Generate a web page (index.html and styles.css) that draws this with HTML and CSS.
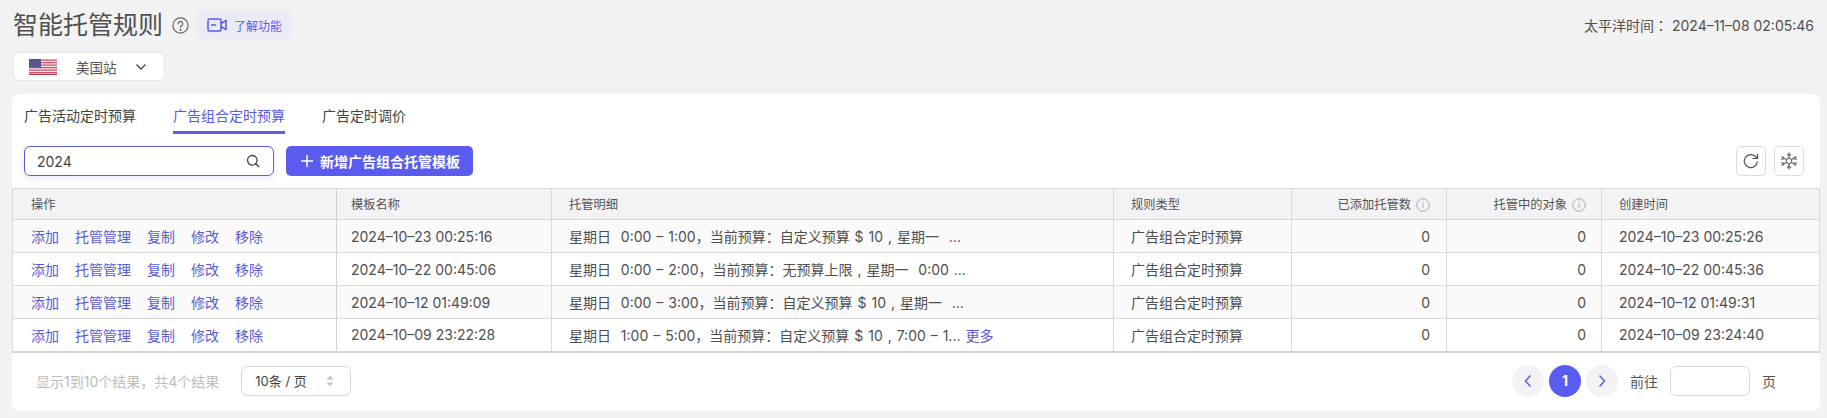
FILE: index.html
```html
<!DOCTYPE html>
<html lang="zh-CN">
<head>
    <meta charset="UTF-8">
    <meta name="viewport" content="width=device-width, initial-scale=1.0">
    <title>智能托管规则</title>
    <link rel="stylesheet" href="styles.css">
</head>
<body>
    <header class="page-head">
        <div class="title-wrap">
            <h1>智能托管规则</h1>
            <svg class="help-icon" viewBox="0 0 17 17" fill="none" stroke="#666" stroke-width="1.2">
                <circle cx="8.5" cy="8.5" r="7.6"/>
                <path d="M6.2 6.8a2.3 2.300 0 1 1 3.600 1.800c-.8.5-1.300.9-1.300 1.800" stroke-linecap="round"/>
                <circle cx="8.5" cy="12.800" r=".5" fill="#666"/>
            </svg>
            <button class="learn-btn">
                <svg class="video-icon" viewBox="0 0 20 14" fill="none" stroke="#5a5be8" stroke-width="1.5">
                    <rect x="1" y="1" width="13" height="12" rx="1.5"/>
                    <path d="M4.5 7h4" stroke-linecap="round"/>
                    <path d="M14 5.5 19 2.5v9l-5-3" stroke-linejoin="round"/>
                </svg>
                了解功能
            </button>
        </div>
        <div class="clock">太平洋时间<span class="clock-colon" lang="zh-TW">：</span> 2024–11–08 02:05:46</div>
    </header>

    <div class="site-select">
        <svg class="flag" viewBox="0 0 28 16">
            <rect width="28" height="16" fill="#f4e6e8"/>
            <path d="M0 1.2h28M0 3.7h28M0 6.2h28M0 8.7h28M0 11.2h28M0 13.7h28" stroke="#c4566a" stroke-width="1.2"/>
            <path d="M0 15.4h28" stroke="#b03a50" stroke-width="1.2"/>
            <rect width="12" height="8.6" fill="#55568f"/>
        </svg>
        <span class="site-name">美国站</span>
        <svg class="chevron" viewBox="0 0 12 8" fill="none" stroke="#444" stroke-width="1.4"><path d="M1.5 1.5 6 6l4.500-4.500"/></svg>
    </div>

    <main class="card">
        <nav class="tabs">
            <a class="tab">广告活动定时预算</a>
            <a class="tab active">广告组合定时预算</a>
            <a class="tab">广告定时调价</a>
        </nav>

        <div class="toolbar">
            <div class="search">
                <span>2024</span>
                <svg class="search-icon" viewBox="0 0 14 14" fill="none" stroke="#444" stroke-width="1.300">
                    <circle cx="6.300" cy="6.300" r="4.800"/>
                    <path d="m9.800 9.800 3 3" stroke-linecap="round"/>
                </svg>
            </div>
            <button class="add-btn">
                <svg class="plus" viewBox="0 0 12 12" fill="none" stroke="#fff" stroke-width="1.500"><path d="M6 0v12M0 6h12"/></svg>
                新增广告组合托管模板
            </button>
            <div class="tool-icons">
                <button class="icon-btn">
                    <svg viewBox="0 0 18 18" fill="none" stroke="#555" stroke-width="1.200">
                        <path d="M15.300 9.500a6.500 6.500 0 1 1-1.900-5l1.900 1.800" stroke-linecap="round"/>
                        <path d="M15.500 2v4.500H11" stroke-linejoin="round" stroke-linecap="round"/>
                    </svg>
                </button>
                <button class="icon-btn">
                    <svg viewBox="0 0 18 18" fill="none" stroke="#666" stroke-width="1.100">
                        <path d="M9 .5v17M1.600 4.700l14.800 8.600M16.400 4.700 1.600 13.300"/>
                        <path d="M7 2 9 3.800 11 2M7 16 9 14.200 11 16M1.200 7.400l2.600-.6-.8-2.500M16.800 7.400l-2.600-.6.8-2.500M1.200 10.600l2.600.6-.8 2.500M16.800 10.600l-2.600.6.8 2.500"/>
                        <path d="m9 6 2.600 1.500v3L9 12l-2.600-1.500v-3z" fill="#fff"/>
                    </svg>
                </button>
            </div>
        </div>

        <table class="rule-table">
            <colgroup>
                <col class="col-actions"><col class="col-name"><col class="col-detail"><col class="col-type"><col class="col-added"><col class="col-active"><col class="col-created">
            </colgroup>
            <thead>
                <tr>
                    <th class="first">操作</th>
                    <th class="after-fixed">模板名称</th>
                    <th>托管明细</th>
                    <th>规则类型</th>
                    <th class="num">已添加托管数<svg class="info" viewBox="0 0 14 14" fill="none" stroke="#a8a8ae"><circle cx="7" cy="7" r="6.300"/><path d="M7 6v4.200M7 3.600v1"/></svg></th>
                    <th class="num">托管中的对象<svg class="info" viewBox="0 0 14 14" fill="none" stroke="#a8a8ae"><circle cx="7" cy="7" r="6.300"/><path d="M7 6v4.200M7 3.600v1"/></svg></th>
                    <th>创建时间</th>
                </tr>
            </thead>
            <tbody>
                <tr>
                    <td class="first"><div class="actions"><a>添加</a><a>托管管理</a><a>复制</a><a>修改</a><a>移除</a></div></td>
                    <td class="after-fixed">2024–10–23 00:25:16</td>
                    <td class="detail">星期日 &nbsp;0:00 – 1:00，当前预算：自定义预算 $ 10 , 星期一 &nbsp;...</td>
                    <td>广告组合定时预算</td>
                    <td class="num">0</td>
                    <td class="num">0</td>
                    <td>2024–10–23 00:25:26</td>
                </tr>
                <tr>
                    <td class="first"><div class="actions"><a>添加</a><a>托管管理</a><a>复制</a><a>修改</a><a>移除</a></div></td>
                    <td class="after-fixed">2024–10–22 00:45:06</td>
                    <td class="detail">星期日 &nbsp;0:00 – 2:00，当前预算：无预算上限 , 星期一 &nbsp;0:00 ...</td>
                    <td>广告组合定时预算</td>
                    <td class="num">0</td>
                    <td class="num">0</td>
                    <td>2024–10–22 00:45:36</td>
                </tr>
                <tr>
                    <td class="first"><div class="actions"><a>添加</a><a>托管管理</a><a>复制</a><a>修改</a><a>移除</a></div></td>
                    <td class="after-fixed">2024–10–12 01:49:09</td>
                    <td class="detail">星期日 &nbsp;0:00 – 3:00，当前预算：自定义预算 $ 10 , 星期一 &nbsp;...</td>
                    <td>广告组合定时预算</td>
                    <td class="num">0</td>
                    <td class="num">0</td>
                    <td>2024–10–12 01:49:31</td>
                </tr>
                <tr>
                    <td class="first"><div class="actions"><a>添加</a><a>托管管理</a><a>复制</a><a>修改</a><a>移除</a></div></td>
                    <td class="after-fixed">2024–10–09 23:22:28</td>
                    <td class="detail">星期日 &nbsp;1:00 – 5:00，当前预算：自定义预算 $ 10 , 7:00 – 1... <a class="more">更多</a></td>
                    <td>广告组合定时预算</td>
                    <td class="num">0</td>
                    <td class="num">0</td>
                    <td>2024–10–09 23:24:40</td>
                </tr>
            </tbody>
        </table>

        <footer class="table-foot">
            <div class="foot-left">
                <span class="summary">显示1到10个结果，共4个结果</span>
                <div class="page-size">
                    <span>10条 / 页</span>
                    <svg class="sort-icon" viewBox="0 0 8 12" fill="#c4c4c8"><path d="M4 .5 7.500 4.500H.5zM4 11.500.5 7.500h7z"/></svg>
                </div>
            </div>
            <div class="pager">
                <button class="page-btn"><svg viewBox="0 0 8 14" fill="none" stroke="#5a5be8" stroke-width="1.500"><path d="M6.500 1.500 1.500 7l5 5.500"/></svg></button>
                <button class="page-btn current">1</button>
                <button class="page-btn"><svg viewBox="0 0 8 14" fill="none" stroke="#5a5be8" stroke-width="1.500"><path d="M1.500 1.500 6.500 7l-5 5.500"/></svg></button>
                <span class="goto">前往</span>
                <div class="page-input"></div>
                <span class="goto-unit">页</span>
            </div>
        </footer>
    </main>
</body>
</html>
```

FILE: styles.css
```css
* {
    box-sizing: border-box;
}

html, body {
    margin: 0;
    height: 418px;
    overflow: hidden;
}

body {
    font-family: Inter, "Noto Sans CJK SC", sans-serif;
    font-size: 14px;
    color: #555555;
    background: #f2f2f3;
    padding: 11px 7px 0 12px;
}

button {
    font-family: inherit;
    border: none;
    cursor: pointer;
}

.page-head {
    display: flex;
    justify-content: space-between;
    align-items: center;
    height: 28px;
}

.title-wrap {
    display: flex;
    align-items: center;
    padding-left: 1px;
}

h1 {
    margin: 0;
    font-size: 25px;
    font-weight: 400;
    line-height: 28px;
    color: #505050;
}

.help-icon {
    width: 17px;
    height: 17px;
    margin-left: 9px;
}

.learn-btn {
    display: flex;
    align-items: center;
    gap: 7px;
    height: 28px;
    width: 94px;
    margin-left: 8px;
    padding: 0 0 0 10px;
    border-radius: 4px;
    background: #ebebf7;
    color: #5a5be8;
    font-size: 12px;
}

.video-icon {
    width: 20px;
    height: 14px;
}

.clock {
    padding-right: 6px;
    color: #505050;
}

.clock-colon {
    font-family: "Noto Sans CJK TC", sans-serif;
}

.site-select {
    display: flex;
    align-items: center;
    width: 152px;
    height: 29px;
    margin: 13px 0 13px 1px;
    padding-left: 15px;
    background: #ffffff;
    border: 1px solid #e6e6e8;
    border-radius: 6px;
}

.flag {
    width: 28px;
    height: 16px;
}

.site-name {
    margin-left: 19px;
    font-size: 13.500px;
}

.chevron {
    width: 12px;
    height: 8px;
    margin-left: 18px;
}

.card {
    height: 317px;
    background: #ffffff;
    border-radius: 8px;
}

.tabs {
    display: flex;
    gap: 37px;
    padding: 11px 0 0 12px;
}

.tab {
    height: 29px;
    line-height: 22px;
    color: #444444;
}

.tab.active {
    color: #5a5be8;
    border-bottom: 3px solid #5a5be8;
}

.toolbar {
    display: flex;
    align-items: center;
    height: 30px;
    margin-top: 12px;
    padding: 0 16px 0 12px;
}

.search {
    display: flex;
    align-items: center;
    justify-content: space-between;
    width: 250px;
    height: 30px;
    padding: 0 13px 0 12px;
    border: 1px solid #5a5bd0;
    border-radius: 6px;
    box-shadow: 0 3px 8px rgba(90, 91, 208, 0.12);
    color: #444444;
}

.search-icon {
    width: 14px;
    height: 14px;
}

.add-btn {
    display: flex;
    align-items: center;
    gap: 7px;
    width: 187px;
    height: 30px;
    margin-left: 12px;
    padding: 0 0 0 15px;
    background: #5a5bef;
    border-radius: 5px;
    color: #ffffff;
    font-size: 14px;
    font-weight: 700;
}

.plus {
    width: 12px;
    height: 12px;
}

.tool-icons {
    display: flex;
    gap: 8px;
    margin-left: auto;
}

.icon-btn {
    display: flex;
    align-items: center;
    justify-content: center;
    width: 30px;
    height: 30px;
    padding: 0;
    background: #ffffff;
    border: 1px solid #dcdce0;
    border-radius: 5px;
}

.icon-btn svg {
    width: 18px;
    height: 18px;
}

.rule-table {
    width: 100%;
    margin-top: 12px;
    border-collapse: collapse;
    table-layout: fixed;
    border-bottom: 2px solid #d3d3d8;
}

.col-actions { width: 324px; }
.col-name { width: 215px; }
.col-detail { width: 562px; }
.col-type { width: 178px; }
.col-added { width: 155px; }
.col-active { width: 155px; }

.rule-table th {
    height: 31px;
    padding: 0 16px 0 17px;
    background: #f3f3f6;
    border: 1px solid #d9d9dd;
    font-size: 12.250px;
    font-weight: 400;
    text-align: left;
    color: #555555;
}

.rule-table td {
    height: 33px;
    padding: 0 16px 0 17px;
    border: 1px solid #d9d9dd;
    white-space: nowrap;
    overflow: hidden;
    color: #4f4f4f;
}

.rule-table tbody tr:nth-child(odd) td {
    background: #fafafa;
}

.rule-table th.num, .rule-table td.num {
    text-align: right;
}

.rule-table th:nth-child(6), .rule-table td:nth-child(6) {
    padding-right: 15px;
}

.rule-table .first {
    padding-left: 18px;
    box-shadow: 2px 0 3px rgba(0, 0, 0, 0.06);
    border-right-color: #d0d0d4;
}

.rule-table .after-fixed {
    padding-left: 14px;
}

.rule-table .detail {
    word-spacing: 1px;
}

.info {
    width: 14px;
    height: 14px;
    margin-left: 5px;
    vertical-align: -3px;
}

.actions {
    display: flex;
    gap: 16px;
}

.actions a, .more {
    color: #5a5bd8;
}

.table-foot {
    display: flex;
    justify-content: space-between;
    align-items: center;
    padding: 12px 44px 0 24px;
}

.foot-left {
    display: flex;
    align-items: center;
    gap: 22px;
}

.summary {
    color: #bdbdbd;
}

.page-size {
    display: flex;
    align-items: center;
    justify-content: space-between;
    width: 110px;
    height: 30px;
    padding: 0 16px 0 13px;
    background: #ffffff;
    border: 1px solid #d8d8dc;
    border-radius: 6px;
    font-size: 13px;
    color: #444444;
}

.sort-icon {
    width: 8px;
    height: 12px;
}

.pager {
    display: flex;
    align-items: center;
}

.page-btn {
    display: flex;
    align-items: center;
    justify-content: center;
    width: 32px;
    height: 32px;
    margin-right: 5px;
    padding: 0;
    background: #f2f2f7;
    border-radius: 50%;
}

.page-btn svg {
    width: 8px;
    height: 14px;
}

.page-btn.current {
    background: #5a5bef;
    color: #ffffff;
    font-size: 14px;
    font-weight: 700;
}

.goto {
    margin-left: 7px;
}

.page-input {
    width: 80px;
    height: 30px;
    margin: 0 12px;
    background: #ffffff;
    border: 1px solid #d8d8dc;
    border-radius: 6px;
}
```
